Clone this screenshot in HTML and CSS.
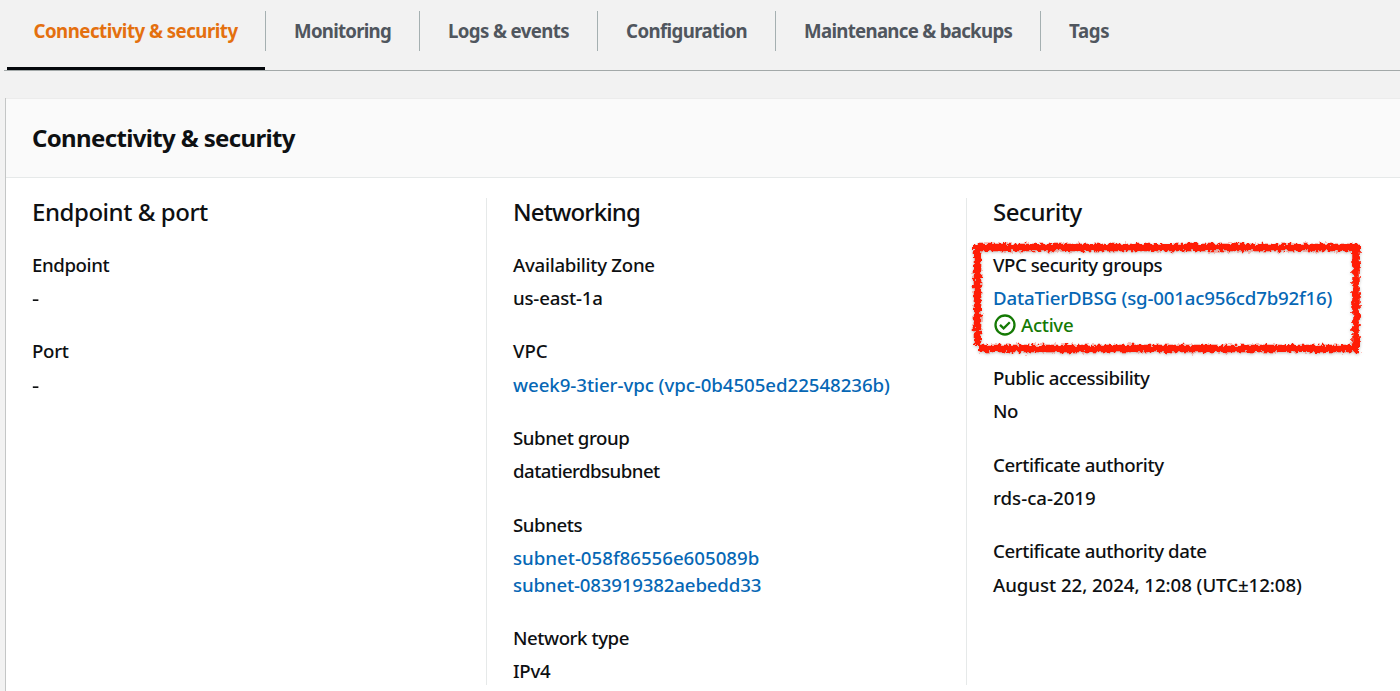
FILE: index.html
```html
<!DOCTYPE html>
<html lang="en">
<head>
<meta charset="utf-8">
<title>Connectivity &amp; security</title>
<link rel="stylesheet" href="styles.css">
</head>
<body>
<nav class="tabs">
  <a class="tab tab-active"><span class="t-conn">Connectivity &amp; security</span></a>
  <a class="tab"><span class="t-mon">Monitoring</span></a>
  <a class="tab"><span class="t-logs">Logs &amp; events</span></a>
  <a class="tab"><span class="t-conf">Configuration</span></a>
  <a class="tab"><span class="t-maint">Maintenance &amp; backups</span></a>
  <a class="tab"><span class="t-tags">Tags</span></a>
</nav>
<main class="panel">
  <header class="panel-head"><h1>Connectivity &amp; security</h1></header>
  <div class="columns">
    <section class="column">
      <h2><span class="h-end">Endpoint &amp; port</span></h2>
      <dl>
        <dt><span class="s-end">Endpoint</span></dt><dd><span class="dash">-</span></dd>
        <dt><span class="s-port">Port</span></dt><dd><span class="dash">-</span></dd>
      </dl>
    </section>
    <section class="column">
      <h2><span class="h-net">Networking</span></h2>
      <dl>
        <dt><span class="s-az">Availability Zone</span></dt><dd><span class="s-use">us-east-1a</span></dd>
        <dt><span class="s-vpc">VPC</span></dt><dd><a class="s-vpcid">week9-3tier-vpc (vpc-0b4505ed22548236b)</a></dd>
        <dt><span class="s-sg">Subnet group</span></dt><dd><span class="s-dt">datatierdbsubnet</span></dd>
        <dt><span class="s-subs">Subnets</span></dt><dd><a class="s-sub1">subnet-058f86556e605089b</a></dd><dd><a class="s-sub2">subnet-083919382aebedd33</a></dd>
        <dt><span class="s-nt">Network type</span></dt><dd><span class="s-ip">IPv4</span></dd>
      </dl>
    </section>
    <section class="column">
      <h2><span class="h-sec">Security</span></h2>
      <dl>
        <dt><span class="s-vsg">VPC security groups</span></dt><dd><a class="s-sgid">DataTierDBSG (sg-001ac956cd7b92f16)</a></dd>
        <dd class="status"><svg class="check" viewBox="0 0 22 22"><circle cx="11" cy="11" r="9.5"/><path d="M6 10.9l3.6 3.5 6.2-6.2"/></svg><span class="s-act">Active</span></dd>
        <dt><span class="s-pub">Public accessibility</span></dt><dd><span class="s-no">No</span></dd>
        <dt><span class="s-ca">Certificate authority</span></dt><dd><span class="s-rds">rds-ca-2019</span></dd>
        <dt><span class="s-cad">Certificate authority date</span></dt><dd><span class="s-date">August 22, 2024, 12:08 (UTC±12:08)</span></dd>
      </dl>
    </section>
  </div>
</main>
<svg class="marker" viewBox="0 0 400 124">
  <defs>
    <filter id="rough" filterUnits="userSpaceOnUse" x="0" y="0" width="400" height="124" color-interpolation-filters="sRGB">
      <feTurbulence type="fractalNoise" baseFrequency="0.3" numOctaves="2" seed="8" result="n"/>
      <feDisplacementMap in="SourceGraphic" in2="n" scale="7" xChannelSelector="R" yChannelSelector="G"/>
    </filter>
  </defs>
  <path filter="url(#rough)" d="M8 12.500H395M391 9V117M395 113.500H14M12.500 9V110"/>
</svg>
</body>
</html>
```
FILE: styles.css
```css
* { box-sizing: border-box; }
body { margin: 0; height: 691px; overflow: hidden; background: #f2f2f2; color: #0e1012; font: 500 18.67px/26.67px "Noto Sans", sans-serif; }

/* Tabs */
.tabs { display: flex; height: 71px; margin-left: 4px; padding: 11px 0 0 1px; border-bottom: 1px solid #a3a9a9; }
.tab { height: 40px; padding: 7px 28px 0; border-right: 1px solid #a5b0b1; font-weight: 700; color: #50565e; white-space: nowrap; }
.tab:last-child { border-right: 0; }
.tab-active { position: relative; padding: 7px 27.500px 0 28.500px; color: #e4700f; }
.tab-active::after { content: ""; position: absolute; left: 2px; right: 0; top: 56px; height: 3px; background: #05080c; }
.t-conn { letter-spacing: -.517px; display: inline-block; }
.t-mon { letter-spacing: -.76px; }
.t-logs, .t-conf { letter-spacing: -.62px; }
.t-maint { letter-spacing: -.714px; }
.t-tags { letter-spacing: -.4px; }

/* Panel */
.panel { margin: 27px 0 0 5px; height: 593px; background: #fff; border-left: 1px solid #c4c6c6; }
.panel-head { height: 80px; background: #fafafa; border-top: 1px solid #ececec; border-bottom: 1px solid #e6e9e9; padding: 23px 26px; }
h1 { margin: 0; font-size: 24px; line-height: 32px; letter-spacing: -.65px; }
.columns { display: grid; grid-template-columns: 480px 480px 1fr; padding-top: 20px; }
.column { padding-left: 26px; height: 487px; white-space: nowrap; }
.column + .column { border-left: 1px solid #e6e9e9; }
h2 { margin: 0 0 25.700px; font-size: 24px; font-weight: 500; line-height: 28px; }
dl, dd { margin: 0; }
dt { margin-bottom: 6.67px; }
dd + dt { margin-top: 26.67px; }
dd a { color: #0667b5; }
.status { display: flex; align-items: center; gap: 5px; color: #157a05; }
.check { width: 22px; height: 22px; margin-left: 1px; fill: none; stroke: currentColor; stroke-width: 2.3; }

/* Text tracking */
.h-end { letter-spacing: -.45px; }
.h-net { letter-spacing: -.85px; }
.h-sec { letter-spacing: -.45px; }
.s-end, .s-ca, .s-cad { letter-spacing: -.42px; }
.s-port, .s-az, .s-ip { letter-spacing: -.28px; }
.s-use { letter-spacing: -.2px; }
.dash { display: inline-block; transform: scaleX(1.2); transform-origin: left; }
.s-vpcid, .s-date { letter-spacing: -.05px; }
.s-sg, .s-nt, .s-subs, .s-pub { letter-spacing: -.44px; }
.s-dt, .s-no { letter-spacing: -.55px; }
.s-sub2 { letter-spacing: -.16px; }
.s-vsg { letter-spacing: -.45px; }
.s-sgid { letter-spacing: -.17px; }
.s-act { letter-spacing: -.3px; }

/* Hand-drawn highlight around the security group */
.marker { position: absolute; left: 965px; top: 235px; width: 400px; height: 124px; fill: none; stroke: #ff1d06; stroke-width: 7.5; pointer-events: none; filter: drop-shadow(0 1px 1.500px rgba(0, 0, 0, .25)); }
```
